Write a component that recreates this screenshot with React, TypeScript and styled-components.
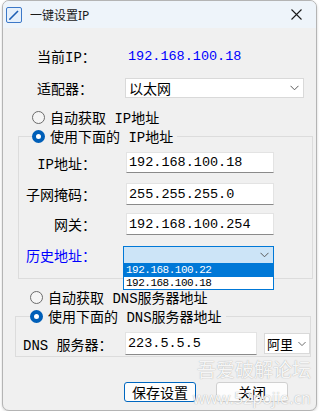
import React from 'react'
import styled, { createGlobalStyle } from 'styled-components'

const GlobalStyle = createGlobalStyle`
  html, body {
    margin: 0;
    padding: 0;
    background: #ffffff;
  }
  body {
    font-family: "Liberation Mono", "Noto Sans CJK SC", monospace;
  }
`

const cjk = `"Liberation Mono", "Noto Sans CJK SC", monospace`

const Window = styled.div`
  position: relative;
  box-sizing: border-box;
  margin-left: 2px;
  width: 315px;
  height: 411px;
  border: 1px solid #b4b4b4;
  border-radius: 7px;
  background: #f0f0f0;
  overflow: hidden;
  box-shadow: 0 1px 3px rgba(0, 0, 0, 0.18);
`

const TitleBar = styled.div`
  display: flex;
  align-items: center;
  height: 27px;
  padding: 0 0 0 3px;
  background: #eef4fa;
  font-family: "Noto Sans", "Noto Sans CJK SC", sans-serif;
  font-size: 12px;
  color: #1a1a1a;
`

const TitleText = styled.span`
  margin-left: 8px;
  flex: 1;
`

const CloseBtn = styled.div`
  display: flex;
  align-items: center;
  justify-content: center;
  width: 40px;
  height: 27px;
`

const Body = styled.div`
  display: flex;
  flex-direction: column;
  font-family: ${cjk};
  font-size: 14px;
  color: #000;
`

const TopRow = styled.div<{ $mt: number }>`
  display: flex;
  align-items: center;
  margin-top: ${p => p.$mt}px;
  padding-left: 34px;
  height: 20px;
`

const TopLabel = styled.span`
  width: 88px;
  white-space: pre;
`

const IpValue = styled.span`
  margin-left: 3px;
  color: #0000ff;
  font-size: 13.5px;
`

const Select = styled.div<{ $w: number; $h: number; $active?: boolean }>`
  box-sizing: border-box;
  display: flex;
  align-items: center;
  justify-content: space-between;
  width: ${p => p.$w}px;
  height: ${p => p.$h}px;
  padding: 0 4px 0 3px;
  background: ${p => (p.$active ? '#cce4f7' : '#ffffff')};
  border: 1px solid ${p => (p.$active ? '#0078d7' : '#d9d9d9')};
  font-size: 14px;
  white-space: pre;
`

const SmallSelect = styled(Select)`
  padding: 0 3px 0 2px;
  margin-left: 7px;
  font-size: 13px;
`

const Chevron = ({ w = 9 }: { w?: number }) => (
  <svg width={w} height="6" viewBox="0 0 9 6">
    <path d="M0.5 0.8 L4.5 4.8 L8.5 0.8" fill="none" stroke="#5a5a5a" strokeWidth="1" />
  </svg>
)

const RadioRow = styled.label<{ $ml: number; $mt: number }>`
  display: flex;
  align-items: center;
  height: 16px;
  margin-top: ${p => p.$mt}px;
  margin-left: ${p => p.$ml}px;
  white-space: pre;
`

const RadioDot = styled.span<{ $on?: boolean }>`
  box-sizing: border-box;
  width: 13px;
  height: 13px;
  margin-right: 5px;
  border-radius: 50%;
  ${p =>
    p.$on
      ? `background: #ffffff; border: 4px solid #005fb8;`
      : `background: #f5f5f5; border: 1px solid #6b6b6b;`}
`

const Group = styled.fieldset<{ $ml: number; $w: number; $mt: number; $pb: number }>`
  box-sizing: border-box;
  position: relative;
  margin: ${p => p.$mt}px 0 0 ${p => p.$ml}px;
  width: ${p => p.$w}px;
  padding: 0 0 ${p => p.$pb}px 0;
  border: 1px solid #dcdcdc;
  min-width: 0;
`

const Legend = styled.legend<{ $ml: number }>`
  padding: 0 4px 0 0;
  margin-left: ${p => p.$ml}px;
  background: #f0f0f0;
`

const FieldRow = styled.div<{ $mt: number }>`
  position: relative;
  display: flex;
  align-items: center;
  margin-top: ${p => p.$mt}px;
`

const FieldLabel = styled.span<{ $w: number; $blue?: boolean; $left?: boolean }>`
  box-sizing: border-box;
  width: ${p => p.$w}px;
  text-align: ${p => (p.$left ? 'left' : 'right')};
  padding-left: ${p => (p.$left ? 7 : 0)}px;
  white-space: pre;
  color: ${p => (p.$blue ? '#0000ff' : '#000')};
`

const Input = styled.div<{ $w: number; $h: number; $ml: number }>`
  box-sizing: border-box;
  display: flex;
  align-items: center;
  width: ${p => p.$w}px;
  height: ${p => p.$h}px;
  margin-left: ${p => p.$ml}px;
  padding-left: 2px;
  background: #ffffff;
  border: 1px solid #e3e3e3;
  border-bottom-color: #8a8a8a;
  font-size: 13.5px;
`

const HistorySelect = styled(Select)`
  margin-left: 27px;
`

const DropList = styled.div`
  position: absolute;
  left: 104px;
  top: 18px;
  box-sizing: border-box;
  width: 151px;
  border: 1px solid #0078d7;
  background: #ffffff;
  z-index: 2;
`

const DropItem = styled.div<{ $sel?: boolean }>`
  height: 12.5px;
  line-height: 12px;
  padding-left: 2px;
  font-size: 11px;
  letter-spacing: -0.5px;
  background: ${p => (p.$sel ? '#0078d7' : '#ffffff')};
  color: ${p => (p.$sel ? '#ffffff' : '#000000')};
`

const Buttons = styled.div`
  display: flex;
  margin-top: 25px;
  padding-left: 121px;
  gap: 20px;
`

const Button = styled.div<{ $primary?: boolean }>`
  box-sizing: border-box;
  display: flex;
  align-items: center;
  justify-content: center;
  width: 72px;
  height: 20px;
  border-radius: 3px;
  background: #fdfdfd;
  border: 1px solid ${p => (p.$primary ? '#0067c0' : '#d0d0d0')};
  font-family: "Noto Sans CJK SC", sans-serif;
  font-size: 14px;
`

const Watermark = styled.div`
  position: absolute;
  right: 5px;
  bottom: 1px;
  display: flex;
  flex-direction: column;
  align-items: flex-end;
  font-family: "Noto Sans", "Noto Sans CJK SC", sans-serif;
  color: rgba(255, 255, 255, 0.92);
  text-shadow: 0 0 1px rgba(80, 80, 80, 0.55);
  pointer-events: none;
  z-index: 3;
`

const WmTop = styled.span`
  font-size: 19px;
  line-height: 22px;
  margin-bottom: 6px;
`

const WmBottom = styled.span`
  font-size: 16px;
  line-height: 22px;
`

const AppIcon = () => (
  <svg width="16" height="16" viewBox="0 0 16 16">
    <rect x="0.5" y="0.5" width="15" height="15" rx="1.5" fill="#e6f0fb" stroke="#3c78c8" />
    <path d="M3.5 12.5 L12 4" stroke="#1e5fb4" strokeWidth="1.6" />
    <path d="M3 13 L4.3 12.6 L3.4 11.7 Z" fill="#1e5fb4" />
  </svg>
)

const CloseIcon = () => (
  <svg width="11" height="11" viewBox="0 0 11 11">
    <path d="M0.5 0.5 L10.5 10.5 M10.5 0.5 L0.5 10.5" stroke="#1a1a1a" strokeWidth="1.1" />
  </svg>
)

export default function App() {
  return (
    <>
      <GlobalStyle />
      <Window>
        <TitleBar>
          <AppIcon />
          <TitleText>一键设置IP</TitleText>
          <CloseBtn>
            <CloseIcon />
          </CloseBtn>
        </TitleBar>
        <Body>
          <TopRow $mt={18}>
            <TopLabel>当前IP：</TopLabel>
            <IpValue>192.168.100.18</IpValue>
          </TopRow>
          <TopRow $mt={12}>
            <TopLabel>适配器：</TopLabel>
            <Select $w={179} $h={20}>
              <span>以太网</span>
              <Chevron />
            </Select>
          </TopRow>
          <RadioRow $ml={29} $mt={11}>
            <RadioDot />
            自动获取 IP地址
          </RadioRow>
          <Group $ml={15} $w={295} $mt={3} $pb={13}>
            <Legend $ml={13}>
              <RadioRow $ml={0} $mt={0}>
                <RadioDot $on />
                使用下面的 IP地址
              </RadioRow>
            </Legend>
            <FieldRow $mt={8}>
              <FieldLabel $w={77}>IP地址：</FieldLabel>
              <Input $w={148} $h={21} $ml={30}>192.168.100.18</Input>
            </FieldRow>
            <FieldRow $mt={10}>
              <FieldLabel $w={77}>子网掩码：</FieldLabel>
              <Input $w={148} $h={22} $ml={30}>255.255.255.0</Input>
            </FieldRow>
            <FieldRow $mt={8}>
              <FieldLabel $w={77}>网关：</FieldLabel>
              <Input $w={148} $h={22} $ml={30}>192.168.100.254</Input>
            </FieldRow>
            <FieldRow $mt={10}>
              <FieldLabel $w={77} $blue>历史地址：</FieldLabel>
              <HistorySelect $w={151} $h={19} $active>
                <span />
                <Chevron />
              </HistorySelect>
              <DropList>
                <DropItem $sel>192.168.100.22</DropItem>
                <DropItem>192.168.100.18</DropItem>
              </DropList>
            </FieldRow>
          </Group>
          <RadioRow $ml={27} $mt={10}>
            <RadioDot />
            自动获取 DNS服务器地址
          </RadioRow>
          <Group $ml={12} $w={296} $mt={3} $pb={1}>
            <Legend $ml={14}>
              <RadioRow $ml={0} $mt={0}>
                <RadioDot $on />
                使用下面的 DNS服务器地址
              </RadioRow>
            </Legend>
            <FieldRow $mt={8}>
              <FieldLabel $w={97} $left>DNS 服务器：</FieldLabel>
              <Input $w={132} $h={23} $ml={12}>223.5.5.5</Input>
              <SmallSelect $w={46} $h={21}>
                <span>阿里</span>
                <Chevron w={8} />
              </SmallSelect>
            </FieldRow>
          </Group>
          <Buttons>
            <Button $primary>保存设置</Button>
            <Button>关闭</Button>
          </Buttons>
        </Body>
        <Watermark>
          <WmTop>吾爱破解论坛</WmTop>
          <WmBottom>www.52pojie.cn</WmBottom>
        </Watermark>
      </Window>
    </>
  )
}
